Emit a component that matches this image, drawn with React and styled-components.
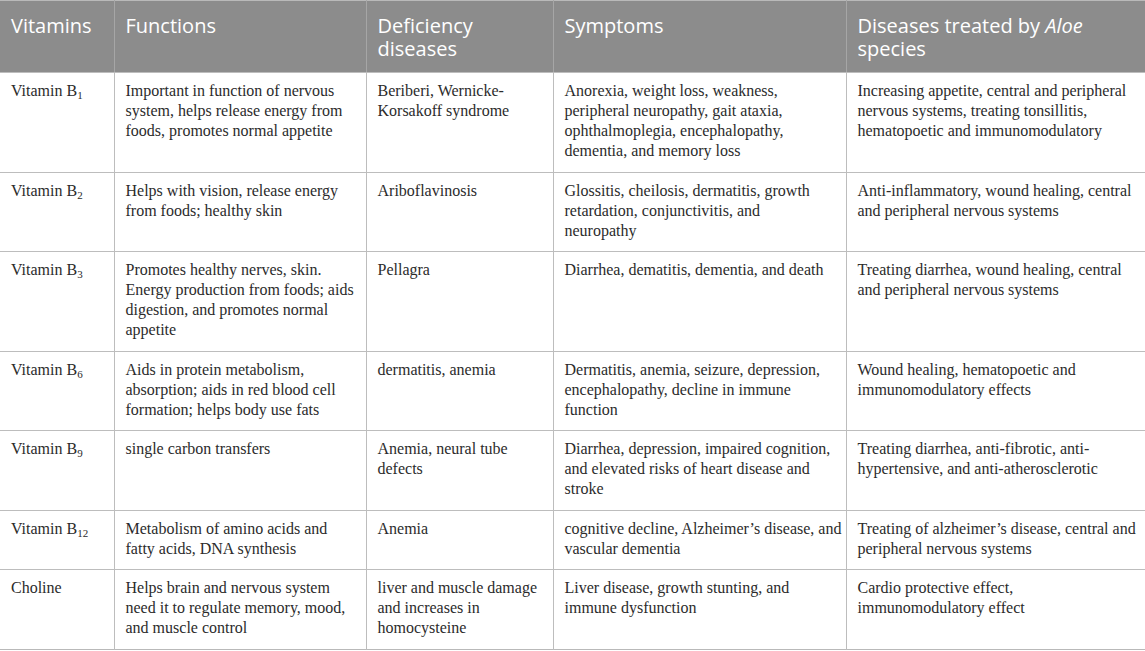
import React from 'react'
import styled, { createGlobalStyle } from 'styled-components'

const GlobalStyle = createGlobalStyle`
    html, body{
        margin: 0;
        padding: 0;
        background: #ffffff;
    }
`;

const rows = [
    {
        name: 'Vitamin B', sub: '1',
        functions: 'Important in function of nervous system, helps release energy from foods, promotes normal appetite',
        deficiency: 'Beriberi, Wernicke-Korsakoff syndrome',
        symptoms: 'Anorexia, weight loss, weakness, peripheral neuropathy, gait ataxia, ophthalmoplegia, encephalopathy, dementia, and memory loss',
        treated: 'Increasing appetite, central and peripheral nervous systems, treating tonsillitis, hematopoetic and immunomodulatory',
    },
    {
        name: 'Vitamin B', sub: '2',
        functions: 'Helps with vision, release energy from foods; healthy skin',
        deficiency: 'Ariboflavinosis',
        symptoms: <>Glossitis, cheilosis, dermatitis, growth retardation, conjunctivitis, and<br />neuropathy</>,
        treated: 'Anti-inflammatory, wound healing, central and peripheral nervous systems',
    },
    {
        name: 'Vitamin B', sub: '3',
        functions: 'Promotes healthy nerves, skin. Energy production from foods; aids digestion, and promotes normal appetite',
        deficiency: 'Pellagra',
        symptoms: 'Diarrhea, dematitis, dementia, and death',
        treated: 'Treating diarrhea, wound healing, central and peripheral nervous systems',
    },
    {
        name: 'Vitamin B', sub: '6',
        functions: 'Aids in protein metabolism, absorption; aids in red blood cell formation; helps body use fats',
        deficiency: 'dermatitis, anemia',
        symptoms: 'Dermatitis, anemia, seizure, depression, encephalopathy, decline in immune function',
        treated: 'Wound healing, hematopoetic and immunomodulatory effects',
    },
    {
        name: 'Vitamin B', sub: '9',
        functions: 'single carbon transfers',
        deficiency: 'Anemia, neural tube defects',
        symptoms: 'Diarrhea, depression, impaired cognition, and elevated risks of heart disease and stroke',
        treated: 'Treating diarrhea, anti-fibrotic, anti-hypertensive, and anti-atherosclerotic',
    },
    {
        name: 'Vitamin B', sub: '12',
        functions: 'Metabolism of amino acids and fatty acids, DNA synthesis',
        deficiency: 'Anemia',
        symptoms: 'cognitive decline, Alzheimer\u2019s disease, and vascular dementia',
        treated: 'Treating of alzheimer\u2019s disease, central and peripheral nervous systems',
    },
    {
        name: 'Choline',
        functions: 'Helps brain and nervous system need it to regulate memory, mood, and muscle control',
        deficiency: 'liver and muscle damage and increases in homocysteine',
        symptoms: 'Liver disease, growth stunting, and immune dysfunction',
        treated: 'Cardio protective effect, immunomodulatory effect',
    },
];

function App() {
    return (
        <>
            <GlobalStyle />
            <Table>
                <colgroup>
                    <col style={{ width: 114 }} />
                    <col style={{ width: 252 }} />
                    <col style={{ width: 187 }} />
                    <col style={{ width: 293 }} />
                    <col />
                </colgroup>
                <thead>
                    <tr>
                        <Head>Vitamins</Head>
                        <Head>Functions</Head>
                        <Head>Deficiency diseases</Head>
                        <Head>Symptoms</Head>
                        <Head>Diseases treated by <em>Aloe</em> species</Head>
                    </tr>
                </thead>
                <tbody>
                    {rows.map((r) => (
                        <tr key={r.name + (r.sub || '')}>
                            <Cell>{r.name}{r.sub && <Sub>{r.sub}</Sub>}</Cell>
                            <Cell $pr={8}>{r.functions}</Cell>
                            <Cell>{r.deficiency}</Cell>
                            <Cell>{r.symptoms}</Cell>
                            <Cell>{r.treated}</Cell>
                        </tr>
                    ))}
                </tbody>
            </Table>
        </>
    )
}

const Table = styled.table`
    width: 1145px;
    border-collapse: collapse;
    table-layout: fixed;
    border-top: 1px solid #b9b9b9;
    border-bottom: 1px solid #b9b9b9;
`;

const Head = styled.th`
    background: #8c8c8c;
    color: #ffffff;
    font-family: "Open Sans", "Noto Sans", sans-serif;
    font-weight: 400;
    font-size: 20px;
    line-height: 23px;
    text-align: left;
    vertical-align: top;
    padding: 13px 6px 12px 11px;
    border-left: 1px solid #a6a6a6;
    border-bottom: 1px solid #bdbdbd;

    &:first-child{
        border-left: none;
    }

    em{
        font-style: italic;
    }
`;

const Cell = styled.td`
    font-family: "Liberation Serif", "Times New Roman", serif;
    font-size: 16px;
    line-height: 20px;
    color: #2b2b2b;
    vertical-align: top;
    padding: 8px ${p => p.$pr || 3}px 10.5px 11px;
    border-left: 1px solid #bdbdbd;
    border-top: 1px solid #bdbdbd;

    &:first-child{
        border-left: none;
    }
`;

const Sub = styled.sub`
    font-size: 11px;
    vertical-align: baseline;
    position: relative;
    top: 3px;
`;

export default App
